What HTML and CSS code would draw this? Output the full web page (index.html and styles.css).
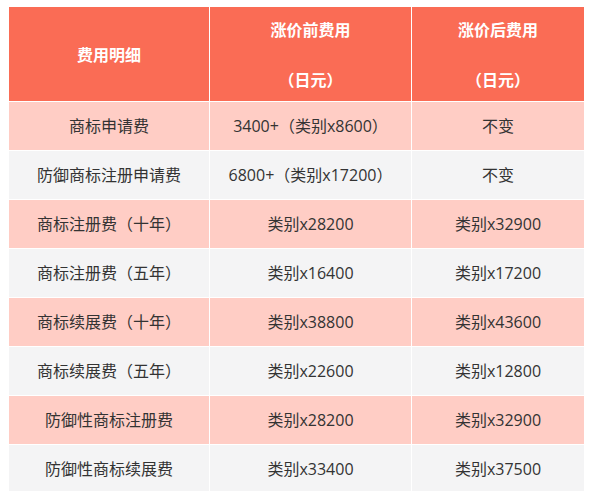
FILE: index.html
```html
<!DOCTYPE html>
<html lang="zh">
<head>
<meta charset="utf-8">
<link rel="stylesheet" href="styles.css">
</head>
<body>
<table class="fees">
  <colgroup>
    <col class="c1"><col class="c2"><col class="c3">
  </colgroup>
  <thead>
    <tr>
      <th class="mid">费用明细</th>
      <th><div class="hl">涨价前费用</div><div class="hl second">（日元）</div></th>
      <th><div class="hl">涨价后费用</div><div class="hl second">（日元）</div></th>
    </tr>
  </thead>
  <tbody>
    <tr class="pink"><td>商标申请费</td><td>3400+（类别x8600）</td><td>不变</td></tr>
    <tr class="grey"><td>防御商标注册申请费</td><td>6800+（类别x17200）</td><td>不变</td></tr>
    <tr class="pink"><td>商标注册费（十年）</td><td>类别x28200</td><td>类别x32900</td></tr>
    <tr class="grey"><td>商标注册费（五年）</td><td>类别x16400</td><td>类别x17200</td></tr>
    <tr class="pink"><td>商标续展费（十年）</td><td>类别x38800</td><td>类别x43600</td></tr>
    <tr class="grey"><td>商标续展费（五年）</td><td>类别x22600</td><td>类别x12800</td></tr>
    <tr class="pink"><td>防御性商标注册费</td><td>类别x28200</td><td>类别x32900</td></tr>
    <tr class="grey"><td>防御性商标续展费</td><td>类别x33400</td><td>类别x37500</td></tr>
  </tbody>
</table>
</body>
</html>
```
FILE: styles.css
```css
html, body {
  background: #ffffff;
}
body {
  margin: 6px 0 0 8px;
  font-family: "Open Sans", "Noto Sans CJK SC", "Microsoft YaHei", sans-serif;
  font-size: 16px;
  color: #333333;
  text-spacing-trim: space-all;
}
.fees {
  border-collapse: collapse;
  table-layout: fixed;
  width: 576px;
}
.c1 { width: 201px; }
.c2 { width: 202px; }
.c3 { width: 173px; }
.fees th,
.fees td {
  border: 1px solid #ffffff;
  text-align: center;
  padding: 0;
}
.fees th {
  background: #fa6c55;
  color: #ffffff;
  font-weight: bold;
  font-size: 16px;
  height: 95px;
  vertical-align: top;
  padding-top: 11px;
  box-sizing: border-box;
}
.fees th.mid {
  vertical-align: middle;
  padding-top: 0;
}
.hl {
  line-height: 24px;
}
.hl.second {
  margin-top: 26px;
}
.fees td {
  height: 48px;
  line-height: 20px;
  vertical-align: middle;
}
.pink td { background: #ffcdc5; }
.grey td { background: #f4f4f5; }
```
